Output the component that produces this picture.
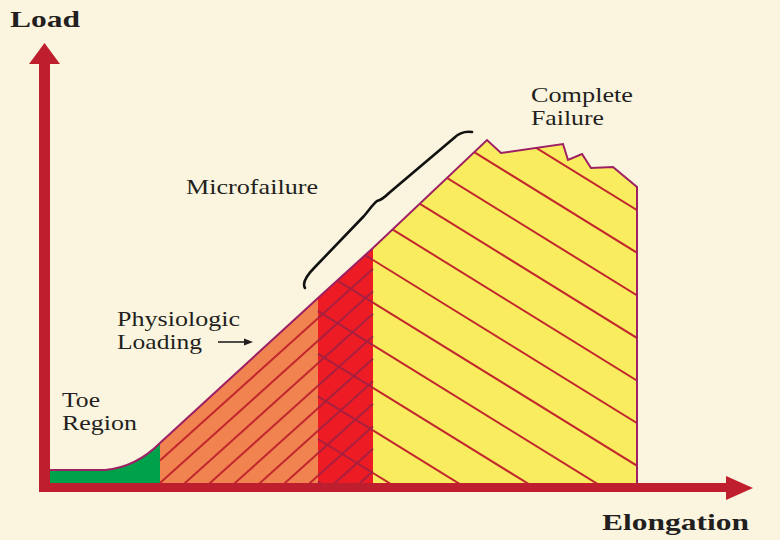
const OUTLINE =
  'M50,470 L105,470 C128,468 146,457 160,443 C200,406 260,351 318,298 L373,248 L487,140 L501,153 L563,144 L568,160 L582,154 L591,168 L613,167 L637,187 L637,483';

const HATCH = '#c1272d';
const HATCH_DARK = '#a8203f';

type Seg = { x1: number; y1: number; x2: number; y2: number; c: string };

// up-right hatching across the orange + red bands, down-right across red + yellow
function hatchLines(): Seg[] {
  const out: Seg[] = [];
  for (let k = -2; k < 22; k++) {
    const x0 = 160 + 25 * k;
    const y = (x: number) => 483 - 0.9 * (x - x0);
    out.push({ x1: 160, y1: y(160), x2: 318, y2: y(318), c: HATCH });
    out.push({ x1: 318, y1: y(318), x2: 373, y2: y(373), c: HATCH_DARK });
  }
  for (let k = -8; k < 8; k++) {
    const y = (x: number) => 260 + 42.6 * k + 0.618 * (x - 373);
    out.push({ x1: 318, y1: y(318), x2: 373, y2: y(373), c: HATCH_DARK });
    out.push({ x1: 373, y1: y(373), x2: 640, y2: y(640), c: HATCH });
  }
  return out;
}

function Label({ x, y, w, children, bold }: { x: number; y: number; w: number; children: string; bold?: boolean }) {
  return (
    <text
      x={x}
      y={y}
      textLength={w}
      lengthAdjust="spacingAndGlyphs"
      fill="#231f20"
      fontSize={bold ? 23 : 22}
      fontWeight={bold ? 700 : 400}
      fontFamily="Liberation Serif, Times New Roman, serif"
    >
      {children}
    </text>
  );
}

export default function App() {
  const lines = hatchLines();

  return (
    <div className="w-[780px] h-[540px] bg-[#fbf5df] overflow-hidden font-['Liberation_Serif',serif]">
      <svg width="780" height="540" viewBox="0 0 780 540" className="block">
        <defs>
          <clipPath id="shape">
            <path d={OUTLINE + ' L50,483 Z'} />
          </clipPath>
        </defs>

        {/* coloured bands under the curve */}
        <g clipPath="url(#shape)">
          <rect x="50" y="100" width="110" height="383" fill="#00a14b" />
          <rect x="160" y="100" width="158" height="383" fill="#f0834f" />
          <rect x="318" y="100" width="55" height="383" fill="#ed1c24" />
          <rect x="373" y="100" width="266" height="383" fill="#f9ed5f" />
          {lines.map((l, i) => (
            <line key={i} x1={l.x1} y1={l.y1} x2={l.x2} y2={l.y2} stroke={l.c} strokeWidth="2" />
          ))}
        </g>
        <path d={OUTLINE} fill="none" stroke="#9e1f63" strokeWidth="2" strokeLinejoin="miter" />

        {/* axes */}
        <rect x="39" y="62" width="11" height="430" fill="#be1e2d" />
        <polygon points="44.5,43 60,64 29,64" fill="#be1e2d" />
        <rect x="39" y="483" width="690" height="9" fill="#be1e2d" />
        <polygon points="753,488 726,476 726,500" fill="#be1e2d" />

        {/* microfailure brace */}
        <path
          d="M305,288 C302,283 307,275 315,267 L364,216 C370,209 373,204 377,201 C381,200 384,198 389,193 L454,138 C459,133 464,131 472,132"
          fill="none"
          stroke="#111"
          strokeWidth="2.6"
          strokeLinecap="round"
          strokeLinejoin="round"
        />

        {/* physiologic loading arrow */}
        <line x1="218" y1="342" x2="246" y2="342" stroke="#231f20" strokeWidth="1.6" />
        <polygon points="253,342 244,338.5 244,345.5" fill="#231f20" />

        <Label x={10} y={27} w={70} bold>Load</Label>
        <Label x={602} y={530} w={147} bold>Elongation</Label>
        <Label x={531} y={102} w={102}>Complete</Label>
        <Label x={531} y={125} w={73}>Failure</Label>
        <Label x={186} y={194} w={132}>Microfailure</Label>
        <Label x={117} y={326} w={123}>Physiologic</Label>
        <Label x={117} y={349} w={85}>Loading</Label>
        <Label x={62} y={407} w={38}>Toe</Label>
        <Label x={62} y={430} w={75}>Region</Label>
      </svg>
    </div>
  );
}
